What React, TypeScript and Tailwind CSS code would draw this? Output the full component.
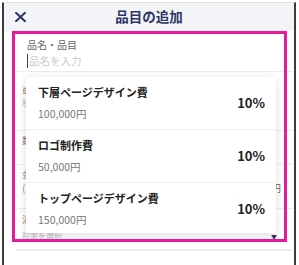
const items = [
  { name: '下層ページデザイン費', price: '100,000円', tax: '10%' },
  { name: 'ロゴ制作費', price: '50,000円', tax: '10%' },
  { name: 'トップページデザイン費', price: '150,000円', tax: '10%' },
]

const jp = "font-['Noto_Sans_CJK_JP','Noto_Sans',sans-serif]"

export default function App() {
  return (
    <div className={`relative h-[265px] w-[299px] overflow-hidden bg-white ${jp}`}>
      {/* 端末フレーム */}
      <div className="ml-[2px] mt-[2px] h-[300px] w-[294px] border-x-2 border-t border-x-[#3d3d3d] border-t-[#e2e2e2]">
        <header className="relative flex h-[28px] items-center justify-center bg-[#f4f5f8]">
          <svg className="absolute left-[11px] top-[9px]" width="11" height="10" viewBox="0 0 11 10">
            <path d="M1 0.8 L10 9.2 M10 0.8 L1 9.2" stroke="#2d3567" strokeWidth="2" strokeLinecap="square" />
          </svg>
          <h1 className="text-[13.5px] font-bold leading-none text-[#2d3567]">品目の追加</h1>
        </header>

        {/* フォーム本体（ドロップダウンの下に隠れている） */}
        <div className="ml-[12px] mr-[1px]">
          <div className="h-[41px] border-b border-[#ececec] pl-[11px] pt-[8px]">
            <p className="text-[10px] leading-[12px] text-[#666]">品名・品目</p>
            <div className="mt-[2px] flex h-[16px] items-center">
              <span className="mr-[1px] h-[14px] w-px bg-[#444]" />
              <span className="text-[10.5px] text-[#cacaca]">品名を入力</span>
            </div>
          </div>
          <div className="h-[59px] border-b border-[#ececec] pl-[6px] pt-[14px]">
            <p className="text-[9px] leading-[12px] text-[#777]">単価</p>
            <p className="text-[8px] leading-[10px] text-[#bbb]">税抜</p>
          </div>
          <div className="h-[34px] border-b border-[#ececec] pl-[6px] pt-[4px]">
            <p className="text-[9px] leading-[12px] text-[#777]">数量</p>
          </div>
          <div className="h-[44px] border-b border-[#ececec] pl-[6px] pr-[12px] pt-[4px]">
            <p className="text-[9px] leading-[12px] text-[#777]">金額</p>
            <div className="flex justify-between text-[10px] leading-[14px] text-[#999]">
              <span>(税込)</span>
              <span className="text-[#666]">円</span>
            </div>
          </div>
          <div className="mr-[2px] h-[42px] border-b-2 border-[#eeeeee] pl-[6px] pr-[14px] pt-[5px]">
            <p className="text-[9px] leading-[12px] text-[#777]">消費税</p>
            <div className="mt-[4px] flex items-center justify-between">
              <span className="text-[8px] text-[#bbb]">税率を選択</span>
              <span className="text-[6px] text-[#2d3567]">▼</span>
            </div>
          </div>
        </div>
      </div>

      {/* 候補ドロップダウン */}
      <ul className="absolute left-[26px] top-[77px] w-[250px] bg-white shadow-[0_2px_8px_rgba(0,0,0,0.14)]">
        {items.map((item, i) => (
          <li
            key={item.name}
            className={`flex items-center justify-between pl-[12px] pr-[11px] ${
              i < items.length - 1 ? 'border-b border-[#efefef] py-[8px]' : 'pb-[6px] pt-[8px]'
            }`}
          >
            <div>
              <p className="text-[11px] font-bold leading-[14px] text-[#222]">{item.name}</p>
              <p className="mt-[8px] text-[10.5px] leading-[14px] text-[#777]">{item.price}</p>
            </div>
            <span className="text-[13px] font-bold text-[#222]">{item.tax}</span>
          </li>
        ))}
      </ul>

      {/* 強調枠 */}
      <div className="pointer-events-none absolute left-[12px] top-[31px] h-[211px] w-[275px] border-[3px] border-[#e8199c]" />
    </div>
  )
}
